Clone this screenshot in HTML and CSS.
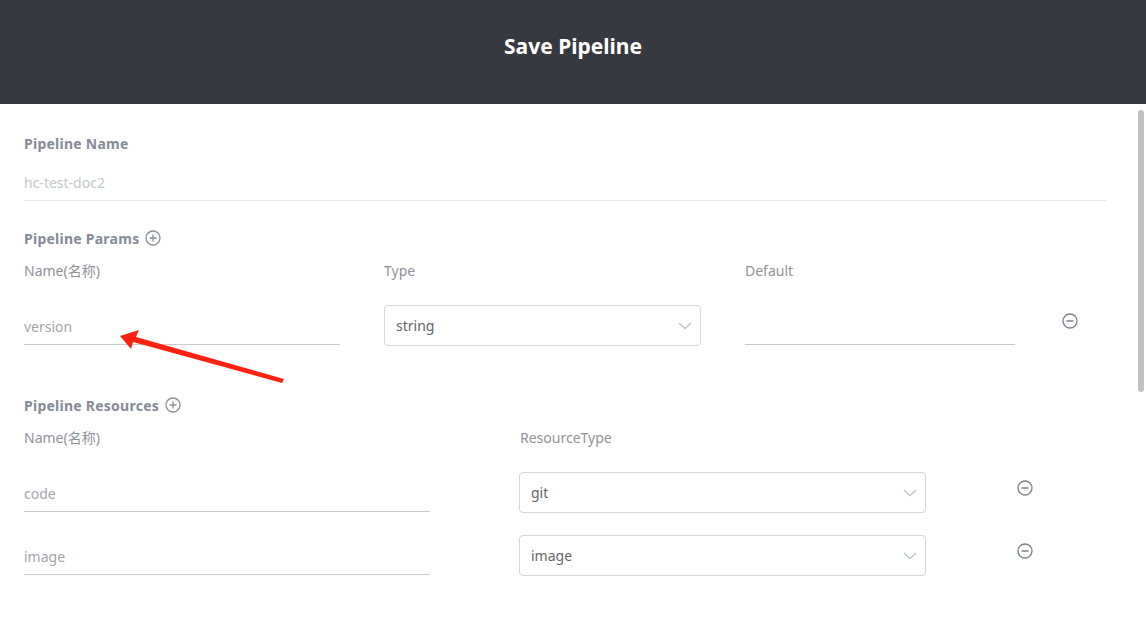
FILE: index.html
```html
<!DOCTYPE html>
<html>
<head>
<meta charset="utf-8">
<link rel="stylesheet" href="styles.css">
</head>
<body>
<header class="top">Save Pipeline</header>
<main class="content">
  <section class="sec">
    <h3 class="title">Pipeline Name</h3>
    <div class="line-input wide"><span class="ph">hc-test-doc2</span></div>
  </section>

  <section class="sec params">
    <h3 class="title">Pipeline Params
      <svg class="ico" viewBox="0 0 16 16"><circle cx="8" cy="8" r="7" fill="none" stroke="#8a909c" stroke-width="1.3"/><path d="M8 4.5v7M4.5 8h7" stroke="#8a909c" stroke-width="1.3"/></svg>
    </h3>
    <div class="prow labels">
      <span class="c1">Name(名称)</span><span class="c2">Type</span><span class="c3">Default</span>
    </div>
    <div class="prow fields">
      <div class="line-input c1"><span class="val">version</span></div>
      <div class="select c2"><span>string</span>
        <svg class="chev" viewBox="0 0 14 8"><path d="M1 1l6 5.5L13 1" fill="none" stroke="#c0c4cc" stroke-width="1.5"/></svg>
      </div>
      <div class="line-input c3"></div>
      <svg class="ico minus" viewBox="0 0 16 16"><circle cx="8" cy="8" r="7" fill="none" stroke="#7d828c" stroke-width="1.3"/><path d="M4.5 8h7" stroke="#7d828c" stroke-width="1.5"/></svg>
    </div>
  </section>

  <section class="sec res">
    <h3 class="title">Pipeline Resources
      <svg class="ico" viewBox="0 0 16 16"><circle cx="8" cy="8" r="7" fill="none" stroke="#8a909c" stroke-width="1.3"/><path d="M8 4.5v7M4.5 8h7" stroke="#8a909c" stroke-width="1.3"/></svg>
    </h3>
    <div class="rrow labels">
      <span class="r1">Name(名称)</span><span class="r2">ResourceType</span>
    </div>
    <div class="rrow fields">
      <div class="line-input r1"><span class="val">code</span></div>
      <div class="select r2"><span>git</span>
        <svg class="chev" viewBox="0 0 14 8"><path d="M1 1l6 5.5L13 1" fill="none" stroke="#c0c4cc" stroke-width="1.5"/></svg>
      </div>
      <svg class="ico minus" viewBox="0 0 16 16"><circle cx="8" cy="8" r="7" fill="none" stroke="#7d828c" stroke-width="1.3"/><path d="M4.5 8h7" stroke="#7d828c" stroke-width="1.5"/></svg>
    </div>
    <div class="rrow fields second">
      <div class="line-input r1"><span class="val">image</span></div>
      <div class="select r2"><span>image</span>
        <svg class="chev" viewBox="0 0 14 8"><path d="M1 1l6 5.5L13 1" fill="none" stroke="#c0c4cc" stroke-width="1.5"/></svg>
      </div>
      <svg class="ico minus" viewBox="0 0 16 16"><circle cx="8" cy="8" r="7" fill="none" stroke="#7d828c" stroke-width="1.3"/><path d="M4.5 8h7" stroke="#7d828c" stroke-width="1.5"/></svg>
    </div>
  </section>
</main>

<svg class="arrow" viewBox="0 0 1146 628" width="1146" height="628">
  <polygon points="120,336 139,330 136,337 284,379 282,383 133,342 131,349" fill="#ff2212"/>
</svg>
<div class="scroll-thumb"></div>
</body>
</html>
```
FILE: styles.css
```css
* { box-sizing: border-box; }
html, body { margin: 0; padding: 0; }
body {
  width: 1146px;
  height: 628px;
  overflow: hidden;
  background: #fff;
  font-family: "Noto Sans", "Noto Sans CJK SC", sans-serif;
  font-size: 14px;
  color: #909399;
  position: relative;
}
.top {
  height: 104px;
  background: #36393f;
  color: #fff;
  font-weight: 700;
  font-size: 21px;
  display: flex;
  align-items: center;
  justify-content: center;
  padding-bottom: 12px;
}
.content { padding: 29px 40px 0 24px; }
.title {
  margin: 0;
  font-size: 14px;
  font-weight: 700;
  color: #858b97;
  display: flex;
  align-items: center;
  gap: 6px;
  height: 20px;
  letter-spacing: 0.25px;
}
.ico { width: 16px; height: 16px; flex: none; }
.line-input {
  height: 39px;
  border-bottom: 1px solid #c8cad0;
  display: flex;
  align-items: center;
  padding-top: 2px;
}
.line-input.wide {
  width: 1082px;
  height: 39px;
  margin-top: 9px;
  border-bottom-color: #e4e7ed;
}
.ph { color: #c4c7cd; }
.val { color: #a3a6ad; }

.params { margin-top: 27px; }
.prow { display: flex; align-items: center; }
.prow.labels { margin-top: 12px; height: 20px; }
.prow .c1 { width: 316px; }
.prow .c2 { width: 317px; margin-left: 44px; }
.prow .c3 { width: 270px; margin-left: 44px; }
.prow.fields { margin-top: 25px; }
.prow.fields .minus { margin-left: 47px; margin-top: -10px; }

.select {
  height: 41px;
  border: 1px solid #d4d6db;
  border-radius: 4px;
  display: flex;
  align-items: center;
  justify-content: space-between;
  padding: 0 8px 0 11px;
  color: #63666c;
}
.chev { width: 14px; height: 8px; }

.res { margin-top: 49px; }
.rrow { display: flex; align-items: center; }
.rrow.labels { margin-top: 12px; height: 20px; }
.rrow .r1 { width: 406px; }
.rrow .r2 { width: 407px; margin-left: 89px; }
.rrow.labels .r2 { margin-left: 90px; }
.rrow.fields { margin-top: 25px; }
.rrow.fields.second { margin-top: 22px; }
.rrow.fields .minus { margin-left: 91px; margin-top: -10px; }

.arrow {
  position: absolute;
  left: 0;
  top: 0;
  pointer-events: none;
}
.scroll-thumb {
  position: absolute;
  left: 1138px;
  top: 110px;
  width: 6px;
  height: 282px;
  border-radius: 3px;
  background: #c1c1c1;
}
```
